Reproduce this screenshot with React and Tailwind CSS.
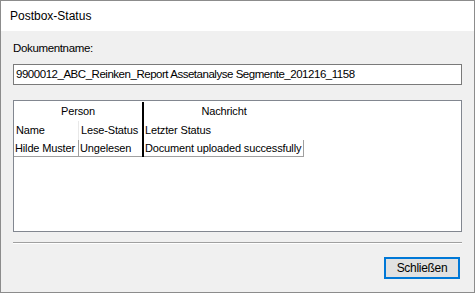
export default function App() {
  const font = { fontFamily: '"Liberation Sans", Arial, sans-serif' };
  return (
    <div
      className="w-[475px] h-[293px] flex flex-col border border-[#8c8c8c] bg-[#f0f0f0] text-[11.5px] tracking-[-0.35px] text-black overflow-hidden"
      style={font}
    >
      {/* Title bar */}
      <div className="h-[30px] shrink-0 bg-white flex items-center pl-[9px]">
        <span className="text-[12px] tracking-normal leading-none">Postbox-Status</span>
      </div>

      {/* Body */}
      <div className="flex-1 flex flex-col px-[12px]">
        <div className="mt-[10px] h-[14px] leading-[14px]">Dokumentname:</div>

        <div className="mt-[9px] h-[21px] border border-[#7a7a7a] bg-white flex items-center pl-[2px] tracking-[-0.47px] whitespace-nowrap overflow-hidden">
          9900012_ABC_Reinken_Report Assetanalyse Segmente_201216_1158
        </div>

        {/* Status table */}
        <div className="mt-[15px] h-[132px] border border-[#828790] bg-white text-[11px] tracking-[-0.15px] whitespace-nowrap">
          <div className="flex items-start">
            <div className="w-[128px] shrink-0">
              <div className="h-[20px] flex items-center justify-center">Person</div>
              <div className="h-[19px] flex">
                <div className="w-[65px] shrink-0 border-r border-[#e8e8e8] pl-[2px] flex items-center">Name</div>
                <div className="flex-1 pl-[2px] flex items-center overflow-hidden">Lese-Status</div>
              </div>
              <div className="h-[17px] flex border-b border-[#a0a0a0]">
                <div className="w-[65px] shrink-0 border-r border-[#a0a0a0] pl-[1px] flex items-center overflow-hidden">Hilde Muster</div>
                <div className="flex-1 pl-[1px] flex items-center overflow-hidden">Ungelesen</div>
              </div>
            </div>
            <div className="w-[2px] h-[55px] mt-[1px] shrink-0 bg-black" />
            <div className="w-[160px] shrink-0">
              <div className="h-[20px] flex items-center justify-center">Nachricht</div>
              <div className="h-[19px] pl-[1px] flex items-center">Letzter Status</div>
              <div className="h-[17px] border-b border-r border-[#a0a0a0] pl-[1px] flex items-center overflow-hidden">
                Document uploaded successfully
              </div>
            </div>
          </div>
        </div>

        {/* Etched separator */}
        <div className="mt-[10px] h-[2px] border-t border-b border-t-[#a0a0a0] border-b-white" />

        <div className="mt-[13px] flex justify-end pr-[2px]">
          <button
            className="w-[76px] h-[22px] border-2 border-[#0078d7] bg-[#e1e1e1] flex items-center justify-center text-[12px] tracking-[-0.3px]"
            style={font}
          >
            Schließen
          </button>
        </div>
      </div>
    </div>
  );
}
